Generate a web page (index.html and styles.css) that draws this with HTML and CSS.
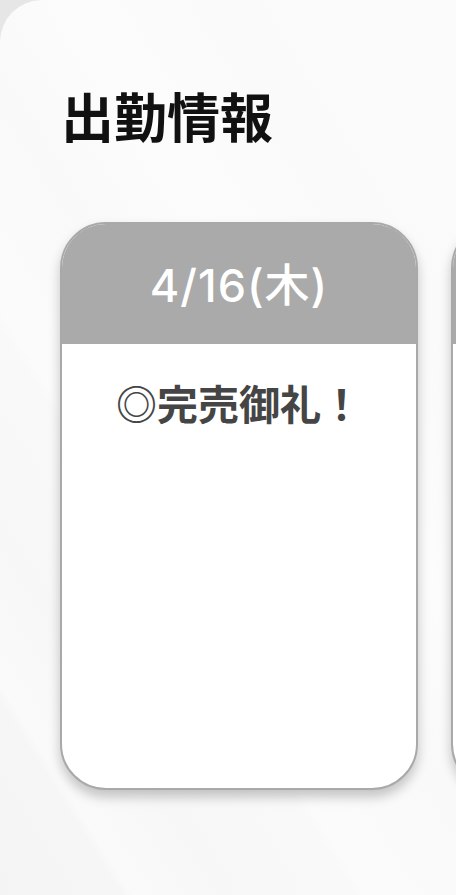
FILE: index.html
```html
<!DOCTYPE html>
<html lang="ja">
<head>
<meta charset="utf-8">
<link rel="stylesheet" href="styles.css">
</head>
<body>
<section class="panel">
  <h2 class="title">出勤情報</h2>
  <div class="cards">
    <div class="card">
      <div class="card-head">4/16(木)</div>
      <div class="card-body">◎完売御礼！</div>
    </div>
    <div class="card">
      <div class="card-head"></div>
      <div class="card-body"></div>
    </div>
  </div>
</section>
</body>
</html>
```
FILE: styles.css
```css
html, body {
  margin: 0;
  padding: 0;
}
body {
  width: 456px;
  height: 895px;
  overflow: hidden;
  background: #e6e6e6;
  font-family: "Noto Sans CJK JP", "Noto Sans", sans-serif;
}
.panel {
  box-sizing: border-box;
  height: 895px;
  border-top-left-radius: 42px;
  background:
    linear-gradient(58deg,
      #f4f4f4 0%, #f6f6f6 12%, #fafafa 13%, #f7f7f7 22%,
      #f9f9f9 35%, #fbfbfb 36%, #f9f9f9 50%, #fcfcfc 62%,
      #fafafa 75%, #fbfbfb 100%);
  padding: 80px 0 0 60px;
  overflow: hidden;
}
.title {
  margin: 0;
  font-size: 53px;
  line-height: 70px;
  font-weight: 700;
  color: #111;
  padding-left: 1px;
}
.cards {
  display: flex;
  gap: 33px;
  margin-top: 72px;
  padding-bottom: 30px;
}
.card {
  flex: 0 0 358px;
  box-sizing: border-box;
  height: 568px;
  border: 2px solid #a9a9a9;
  border-radius: 46px;
  background: #fff;
  overflow: hidden;
  box-shadow: 0 7px 12px rgba(0, 0, 0, 0.22);
}
.card-head {
  height: 120px;
  background: #aaaaaa;
  color: #fff;
  display: flex;
  align-items: center;
  justify-content: center;
  font-family: "Inter", "Noto Sans CJK JP", sans-serif;
  font-weight: 500;
  font-size: 45px;
  letter-spacing: 1px;
  padding-bottom: 4px;
  box-sizing: border-box;
}
.card-body {
  padding-top: 32px;
  text-align: center;
  font-size: 41px;
  font-weight: 700;
  color: #454545;
  line-height: 52px;
  min-height: 52px;
}
```
